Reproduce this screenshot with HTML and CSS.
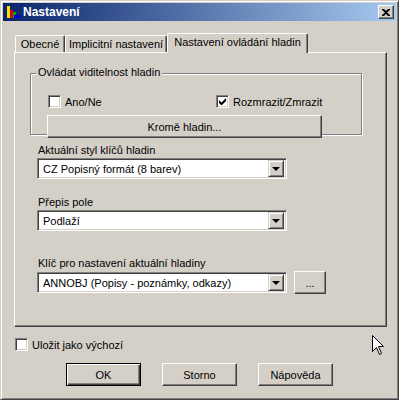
FILE: index.html
```html
<!DOCTYPE html>
<html lang="cs">
<head>
    <meta charset="UTF-8">
    <title>Nastavení</title>
    <link rel="stylesheet" href="styles.css">
</head>
<body>
    <div class="window">
        <div class="titlebar">
            <svg class="app-icon" width="16" height="16" viewBox="0 0 16 16">
                <rect x="2" y="2" width="3" height="12" fill="#ffe000"/>
                <rect x="5" y="6" width="3" height="8" fill="#e00000"/>
                <rect x="8" y="8" width="3" height="6" fill="#00b000"/>
                <rect x="9" y="11" width="6" height="3" fill="#0000e0"/>
            </svg>
            <span class="title">Nastavení</span>
            <button class="close-btn">
                <svg width="8" height="7" viewBox="0 0 8 7">
                    <path d="M0 0h2l2 2 2-2h2v1L5 3.5 8 6v1H6L4 5 2 7H0V6l3-2.5L0 1z" fill="#000"/>
                </svg>
            </button>
        </div>

        <div class="client">
            <div class="tabs">
                <div class="tab">Obecné</div>
                <div class="tab tab-wide">Implicitní nastavení</div>
                <div class="tab active">Nastavení ovládání hladin</div>
            </div>

            <div class="panel">
                <div class="group">
                    <span class="group-title">Ovládat viditelnost hladin</span>
                    <div class="check-row">
                        <label class="check check-first"><span class="box"></span>Ano/Ne</label>
                        <label class="check"><span class="box">
                            <svg width="7" height="7" viewBox="0 0 7 7"><path d="M0 2v3l2 2h1l4-4V0L2.5 4.5z" fill="#000"/></svg>
                        </span>Rozmrazit/Zmrazit</label>
                    </div>
                    <button class="btn btn-except">Kromě hladin...</button>
                </div>

                <div class="field field-first">
                    <div class="field-label">Aktuální styl klíčů hladin</div>
                    <div class="combo">
                        <span class="combo-text">CZ Popisný formát (8 barev)</span>
                        <span class="combo-arrow"><i></i></span>
                    </div>
                </div>

                <div class="field field-second">
                    <div class="field-label">Přepis pole</div>
                    <div class="combo">
                        <span class="combo-text">Podlaží</span>
                        <span class="combo-arrow"><i></i></span>
                    </div>
                </div>

                <div class="field field-third">
                    <div class="field-label">Klíč pro nastavení aktuální hladiny</div>
                    <div class="combo-row">
                        <div class="combo">
                            <span class="combo-text">ANNOBJ (Popisy - poznámky, odkazy)</span>
                            <span class="combo-arrow"><i></i></span>
                        </div>
                        <button class="btn btn-more">...</button>
                    </div>
                </div>
            </div>

            <label class="check check-default"><span class="box"></span>Uložit jako výchozí</label>

            <div class="buttons">
                <button class="btn btn-default">OK</button>
                <button class="btn">Storno</button>
                <button class="btn">Nápověda</button>
            </div>
        </div>

        <svg class="cursor" width="13" height="21" viewBox="0 0 13 21">
            <path d="M0.5 0.5V16.5L4.5 12.5L7.5 19.5L9.5 18.5L6.5 11.5H11.5Z" fill="#fff" stroke="#000"/>
        </svg>
    </div>
</body>
</html>
```

FILE: styles.css
```css
body {
    margin: 0;
    font-family: 'Liberation Sans', Arial, sans-serif;
    font-size: 11px;
    color: #000;
}

.window {
    position: relative;
    width: 399px;
    height: 400px;
    box-sizing: border-box;
    background: #d4d0c8;
    border: 1px solid;
    border-color: #d4d0c8 #404040 #404040 #d4d0c8;
    box-shadow: inset 1px 1px #fff, inset -1px -1px #808080;
    padding: 2px;
}

.titlebar {
    display: flex;
    align-items: center;
    height: 18px;
    background: linear-gradient(to right, #0a246a, #a6caf0);
    padding: 0 2px;
}

.app-icon {
    margin-right: 2px;
}

.title {
    flex: 1;
    color: #fff;
    font-weight: bold;
    font-size: 12px;
}

.close-btn {
    width: 16px;
    height: 14px;
    padding: 0;
    display: flex;
    align-items: center;
    justify-content: center;
    background: #d4d0c8;
    border: 1px solid;
    border-color: #fff #404040 #404040 #fff;
    box-shadow: inset -1px -1px #808080;
}

.client {
    padding: 12px 0 0 11px;
}

/* tabs */
.tabs {
    display: flex;
    align-items: flex-end;
    height: 19px;
    padding-left: 1px;
}

.tab {
    width: 50px;
    height: 17px;
    box-sizing: border-box;
    text-align: center;
    line-height: 16px;
    border: 1px solid;
    border-bottom: none;
    border-color: #fff #404040 #fff #fff;
    box-shadow: inset -1px 0 #808080;
    border-radius: 2px 2px 0 0;
}

.tab-wide {
    width: 102px;
}

.tab.active {
    position: relative;
    z-index: 1;
    width: 141px;
    height: 20px;
    margin-bottom: -1px;
    line-height: 17px;
    background: #d4d0c8;
}

.panel {
    width: 373px;
    height: 275px;
    box-sizing: border-box;
    border: 1px solid;
    border-color: #fff #404040 #404040 #fff;
    box-shadow: inset -1px -1px #808080;
    padding-top: 20px;
}

/* group box */
.group {
    width: 332px;
    height: 62px;
    box-sizing: border-box;
    margin-left: 15px;
    border: 1px solid #808080;
    box-shadow: 1px 1px #fff, inset 1px 1px #fff;
}

.group-title {
    display: inline-block;
    margin: -8px 0 0 5px;
    padding: 0 2px;
    line-height: 13px;
    background: #d4d0c8;
    vertical-align: top;
}

.check-row {
    display: flex;
    margin-top: 9px;
    padding-left: 17px;
}

.check {
    display: flex;
    align-items: center;
    height: 13px;
}

.check-first {
    width: 168px;
}

.box {
    width: 13px;
    height: 13px;
    box-sizing: border-box;
    margin-right: 4px;
    display: flex;
    align-items: center;
    justify-content: center;
    background: #fff;
    border: 1px solid;
    border-color: #808080 #fff #fff #808080;
    box-shadow: inset 1px 1px #404040, inset -1px -1px #d4d0c8;
}

.btn {
    height: 23px;
    padding: 0;
    font-family: inherit;
    font-size: 11px;
    color: #000;
    background: #d4d0c8;
    border: 1px solid;
    border-color: #fff #404040 #404040 #fff;
    box-shadow: inset -1px -1px #808080;
}

.btn-except {
    display: block;
    width: 275px;
    margin: 7px 0 0 16px;
}

/* combos */
.field {
    margin-left: 22px;
}

.field-first {
    margin-top: 9px;
}

.field-second {
    margin-top: 17px;
}

.field-third {
    margin-top: 26px;
}

.field-label {
    line-height: 13px;
    padding-left: 1px;
    margin-bottom: 1px;
}

.combo {
    display: flex;
    align-items: center;
    width: 250px;
    height: 21px;
    box-sizing: border-box;
    background: #fff;
    border: 1px solid;
    border-color: #808080 #fff #fff #808080;
    box-shadow: inset 1px 1px #404040, inset -1px -1px #d4d0c8;
    padding: 2px 2px 2px 5px;
}

.combo-text {
    flex: 1;
}

.combo-arrow {
    width: 16px;
    height: 17px;
    box-sizing: border-box;
    display: flex;
    align-items: center;
    justify-content: center;
    background: #d4d0c8;
    border: 1px solid;
    border-color: #d4d0c8 #404040 #404040 #d4d0c8;
    box-shadow: inset 1px 1px #fff, inset -1px -1px #808080;
}

.combo-arrow i {
    width: 0;
    height: 0;
    border-left: 4px solid transparent;
    border-right: 4px solid transparent;
    border-top: 4px solid #000;
}

.combo-row {
    display: flex;
    align-items: center;
    gap: 7px;
}

.btn-more {
    width: 32px;
}

/* bottom */
.check-default {
    margin: 11px 0 0 1px;
}

.buttons {
    display: flex;
    gap: 21px;
    margin: 12px 0 0 52px;
}

.buttons .btn {
    width: 75px;
}

.btn-default {
    border-color: #000;
    box-shadow: inset 1px 1px #fff, inset -1px -1px #404040, inset -2px -2px #808080;
}

.cursor {
    position: absolute;
    left: 371px;
    top: 334px;
}
```
